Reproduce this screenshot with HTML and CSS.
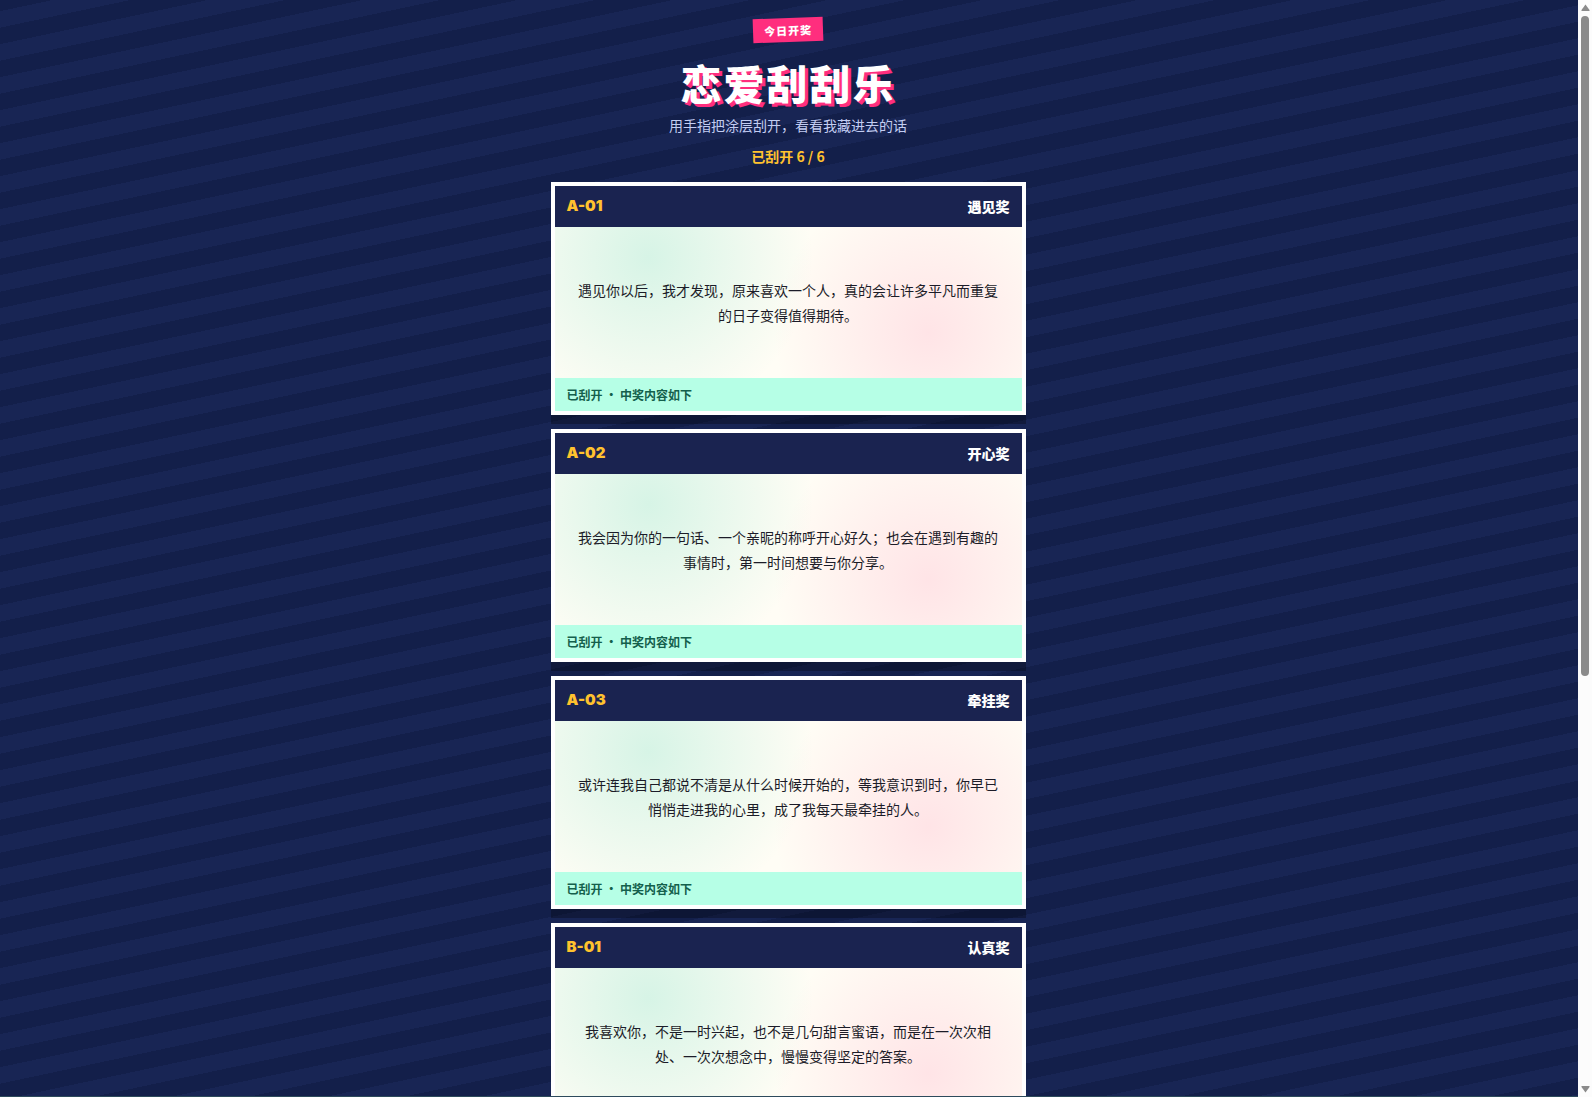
FILE: index.html
```html
<!DOCTYPE html>
<html lang="zh-CN">
<head>
    <meta charset="UTF-8">
    <meta name="viewport" content="width=device-width, initial-scale=1.0">
    <title>恋爱刮刮乐</title>
    <link rel="stylesheet" href="styles.css">
</head>
<body>
    <main class="page">
        <header class="hero">
            <span class="badge">今日开奖</span>
            <h1>恋爱刮刮乐</h1>
            <p class="subtitle">用手指把涂层刮开，看看我藏进去的话</p>
            <p class="progress">已刮开 6 / 6</p>
        </header>

        <section class="tickets">
            <article class="ticket">
                <div class="ticket-head">
                    <span class="ticket-no">A-01</span>
                    <h2>遇见奖</h2>
                </div>
                <div class="ticket-body">
                    <p>遇见你以后，我才发现，原来喜欢一个人，真的会让许多平凡而重复的日子变得值得期待。</p>
                </div>
                <div class="ticket-status">已刮开 · 中奖内容如下</div>
            </article>

            <article class="ticket">
                <div class="ticket-head">
                    <span class="ticket-no">A-02</span>
                    <h2>开心奖</h2>
                </div>
                <div class="ticket-body">
                    <p>我会因为你的一句话、一个亲昵的称呼开心好久；也会在遇到有趣的事情时，第一时间想要与你分享。</p>
                </div>
                <div class="ticket-status">已刮开 · 中奖内容如下</div>
            </article>

            <article class="ticket">
                <div class="ticket-head">
                    <span class="ticket-no">A-03</span>
                    <h2>牵挂奖</h2>
                </div>
                <div class="ticket-body">
                    <p>或许连我自己都说不清是从什么时候开始的，等我意识到时，你早已悄悄走进我的心里，成了我每天最牵挂的人。</p>
                </div>
                <div class="ticket-status">已刮开 · 中奖内容如下</div>
            </article>

            <article class="ticket">
                <div class="ticket-head">
                    <span class="ticket-no">B-01</span>
                    <h2>认真奖</h2>
                </div>
                <div class="ticket-body">
                    <p>我喜欢你，不是一时兴起，也不是几句甜言蜜语，而是在一次次相处、一次次想念中，慢慢变得坚定的答案。</p>
                </div>
            </article>
        </section>
    </main>

    <!-- scrollbar -->
    <div class="scrollbar" aria-hidden="true">
        <svg class="arrow" viewBox="0 0 9 7"><path d="M4.5 0.5 L8.7 6.2 Q8.7 7 8 7 H1 Q0.3 7 0.3 6.2 Z"/></svg>
        <div class="track"><div class="thumb"></div></div>
        <svg class="arrow" viewBox="0 0 9 7"><path d="M4.5 6.5 L8.7 0.8 Q8.7 0 8 0 H1 Q0.3 0 0.3 0.8 Z"/></svg>
    </div>
</body>
</html>
```
FILE: styles.css
```css
* {
    box-sizing: border-box;
}
body {
    margin: 0;
    height: 100vh;
    display: flex;
    overflow: hidden;
    background: #141f4a;
    font-family: "Noto Sans CJK SC", sans-serif;
}
.page {
    flex: 1;
    min-width: 0;
    padding: 18px 18px 40px 16px;
    overflow-y: auto;
    scrollbar-width: none;
    border-bottom: 1px solid #2d4a5c;
    /* diagonal stripes, the tile holds exactly two periods */
    background: repeating-linear-gradient(168deg, #131f4a 0 17%, #182554 17% 42%, #131f4a 42% 50%);
    background-size: 155px 33px;
}
.hero {
    display: flex;
    flex-direction: column;
    align-items: center;
    text-align: center;
}
.badge {
    padding: 0 11px;
    background: #ff2e7e;
    color: #fff;
    font-size: 11px;
    font-weight: 900;
    line-height: 24px;
    letter-spacing: 1px;
    transform: rotate(-2deg);
}
h1 {
    margin: 16px 0 0;
    color: #fff;
    font-size: 41px;
    font-weight: 900;
    line-height: 48px;
    letter-spacing: 2px;
    text-shadow: 3px 3px 0 #ff2e7e;
}
.subtitle {
    margin: 9px 0 0;
    color: #c3cdf2;
    font-size: 14px;
    line-height: 20px;
}
.progress {
    margin: 10px 0 0;
    color: #ffc22e;
    font-size: 14px;
    font-weight: 700;
    line-height: 22px;
}
.tickets {
    display: flex;
    flex-direction: column;
    gap: 14px;
    max-width: 475px;
    margin: 15px auto 0;
}
.ticket {
    border: 4px solid #fff;
    box-shadow: 0 9px 0 rgba(0, 0, 0, 0.28);
}
.ticket-head {
    display: flex;
    justify-content: space-between;
    align-items: center;
    height: 41px;
    padding: 0 12px 2px;
    background: #1a2350;
}
.ticket-no {
    color: #ffc22e;
    font-family: Inter, sans-serif;
    font-size: 15px;
    font-weight: 900;
    line-height: 20px;
}
h2 {
    margin: 0;
    color: #fff;
    font-size: 14px;
    font-weight: 900;
    line-height: 20px;
}
.ticket-body {
    display: flex;
    align-items: center;
    min-height: 151px;
    padding: 16px 20px;
    color: #1c1c28;
    text-align: center;
    background:
        radial-gradient(circle at 20% 20%, rgba(53, 208, 170, 0.2), transparent 42%),
        radial-gradient(circle at 80% 70%, rgba(255, 46, 126, 0.12), transparent 40%),
        #fffdf5;
}
.ticket-body p {
    width: 100%;
    margin: 0;
    font-size: 14px;
    line-height: 25px;
}
.ticket-status {
    height: 33px;
    padding: 0 12px;
    background: #b6ffe6;
    color: #14604c;
    font-size: 12px;
    font-weight: 700;
    line-height: 33px;
}
.scrollbar {
    display: flex;
    flex-direction: column;
    align-items: center;
    gap: 5px;
    width: 14px;
    padding: 4px 0;
    background: #fcfcfc;
}
.arrow {
    width: 9px;
    height: 7px;
    fill: #8b8b8b;
}
.track {
    flex: 1;
}
.thumb {
    width: 8px;
    height: 62%;
    border-radius: 4px;
    background: #8b8b8b;
}
```
